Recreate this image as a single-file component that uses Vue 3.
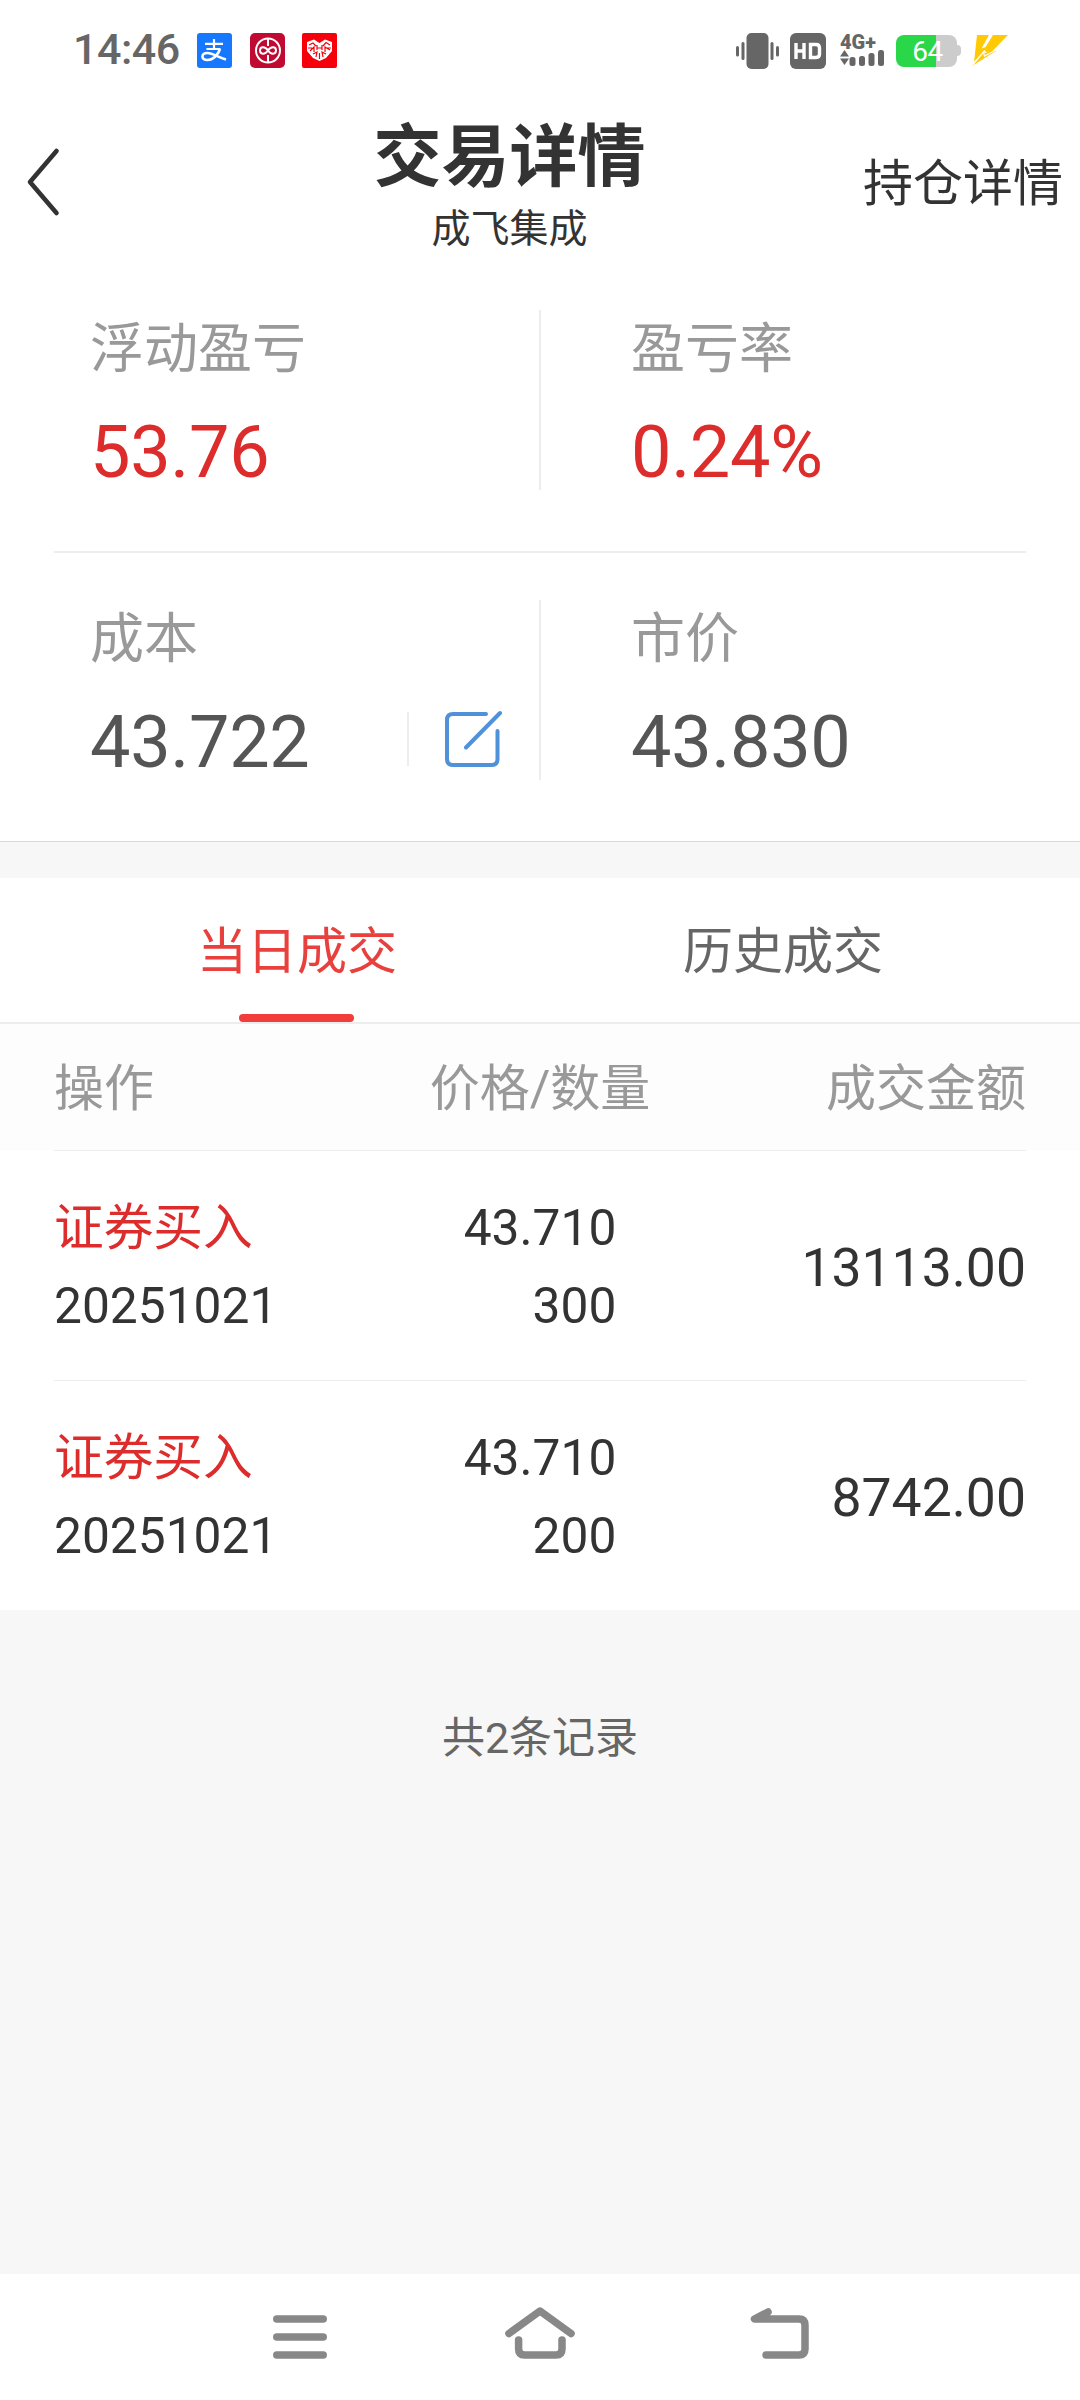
<script setup>
    import { ref } from 'vue';

    const activeTab = ref('today');

    const tabs = [
        { id: 'today', name: '当日成交' },
        { id: 'history', name: '历史成交' }
    ]

    const stats = [
        [
            { label: '浮动盈亏', value: '53.76', up: true },
            { label: '盈亏率', value: '0.24%', up: true }
        ],
        [
            { label: '成本', value: '43.722', editable: true },
            { label: '市价', value: '43.830' }
        ]
    ]

    const deals = ref([
        { id: 1, type: '证券买入', date: '20251021', price: '43.710', count: 300, amount: '13113.00' },
        { id: 2, type: '证券买入', date: '20251021', price: '43.710', count: 200, amount: '8742.00' }
    ])
</script>

<template>
  <div class="page">
    <div class="status">
        <span class="status__time">14:46</span>
        <svg class="status__app" viewBox="0 0 35 35">
            <rect width="35" height="35" rx="3" fill="#1677ff" />
            <g fill="none" stroke="#fff">
                <path d="M8 10.8H26M17 6V16M9.500 16H23.500" stroke-width="2.200" />
                <path d="M23 16C21 22 16 27 10.500 27C3.500 27 4 20 10.500 20C16 20 21 24.500 29 26.500" stroke-width="2.600" />
            </g>
        </svg>
        <svg class="status__app" viewBox="0 0 35 35">
            <rect width="35" height="35" rx="5" fill="#c00a32" />
            <g fill="none" stroke="#fff" stroke-width="2">
                <circle cx="18" cy="17.500" r="12" />
                <path d="M18 5.500V13M18 22V29.500M18 17.500C15 13 10 13.500 10 17.500C10 21.500 15 22 18 17.500C21 13 26 13.500 26 17.500C26 21.500 21 22 18 17.500" />
            </g>
        </svg>
        <svg class="status__app" viewBox="0 0 35 35">
            <rect width="35" height="35" rx="2" fill="#f5000b" />
            <path d="M5 9L12 6.500L17.500 10L23 6.500L30 9V18L24 25L17.500 28L11 25L5 18Z" fill="#fff" />
            <path d="M7 12L11 10L14 13M8 18L12 14V19M21 13L24 9.500L28 12M23 19V14L28 17M15 12V17M20 12V17M15 15H20M11 21L15 19L14 24M24 21L20 19L21 24M17.500 20V26M6 15H10M25 15H29" fill="none" stroke="#f5000b" stroke-width="1.200" />
        </svg>
        <div class="status__right">
            <svg width="43" height="36" viewBox="0 0 43 36" fill="#666">
                <rect x="10.500" width="22" height="36" rx="5" />
                <rect y="13" width="3" height="10.500" rx="1.500" />
                <rect x="5.500" y="9" width="3" height="18" rx="1.500" />
                <rect x="34.500" y="9" width="3" height="18" rx="1.500" />
                <rect x="40" y="13" width="3" height="10.500" rx="1.500" />
            </svg>
            <svg class="status__hd" width="36" height="36" viewBox="0 0 36 36">
                <rect width="36" height="36" rx="6" fill="#666" />
                <path d="M6 10V26M14 10V26M6 18H14M20.500 11.500H26Q29.500 11.500 29.500 15V21Q29.500 24.500 26 24.500H20.500Z" fill="none" stroke="#fff" stroke-width="3.400" />
            </svg>
            <div class="signal">
                <span class="signal__type">4G+</span>
                <svg width="44" height="17" viewBox="0 0 44 17" fill="#666">
                    <path d="M4.500 0L9 6.500H0ZM4.500 15L9 8.500H0Z" />
                    <rect x="9.500" y="7" width="6" height="9" rx="2.500" />
                    <rect x="19" y="6" width="6" height="10" rx="2.500" />
                    <rect x="28.500" y="3" width="6" height="13" rx="2.500" />
                    <rect x="38" y="0" width="6" height="16" rx="2.500" />
                </svg>
            </div>
            <div class="battery">
                <div class="battery__body">64</div>
                <div class="battery__cap"></div>
            </div>
            <svg width="36" height="31" viewBox="0 0 36 31" fill="#ffc905">
                <path d="M5 0H17L9.500 13.500L15.500 11.500L2 27Z" />
                <path d="M21 0H36L20.500 16H24L0 31L10 17.500L15 18L12 14.500Z" />
                <path d="M1 29.500L11.500 17L12.500 21L23 15.500" fill="none" stroke="#fff" stroke-width="1.200" />
            </svg>
        </div>
    </div>

    <header class="header">
        <div class="header__back">
            <svg width="36" height="72" viewBox="0 0 36 72" fill="none" stroke="#333" stroke-width="4.600" stroke-linecap="round" stroke-linejoin="round">
                <path d="M30.500 5L4 36L30.500 67" />
            </svg>
        </div>
        <div class="header__center">
            <h1 class="header__title">交易详情</h1>
            <div class="header__name">成飞集成</div>
        </div>
        <a class="header__link">持仓详情</a>
    </header>

    <section class="stats">
        <div v-for="(row, index) in stats" :key="index" class="stats__row">
            <div v-for="item in row" :key="item.label" class="stats__cell">
                <div class="stats__label">{{ item.label }}</div>
                <div class="stats__line">
                    <span class="stats__value" :class="{ 'stats__value--up': item.up }">{{ item.value }}</span>
                    <div v-if="item.editable" class="edit">
                        <svg width="60" height="60" viewBox="0 0 60 60" fill="none" stroke="#4f92d9" stroke-width="4" stroke-linecap="round" stroke-linejoin="round">
                            <path d="M42 5H9Q3 5 3 11V50Q3 56 9 56H47.500Q53.500 56 53.500 50V22M22 38.500L56 4" />
                        </svg>
                    </div>
                </div>
            </div>
        </div>
    </section>

    <nav class="tabs">
        <div
            v-for="tab in tabs"
            :key="tab.id"
            class="tabs__item"
            :class="{ 'tabs__item--active': activeTab === tab.id }"
            @click="activeTab = tab.id"
        >
            {{ tab.name }}
        </div>
    </nav>

    <div class="head">
        <div class="head__row">
            <span>操作</span>
            <span>价格/数量</span>
            <span>成交金额</span>
        </div>
    </div>

    <div class="list">
        <div v-for="deal in deals" :key="deal.id" class="deal">
            <div>
                <div class="deal__type">{{ deal.type }}</div>
                <div>{{ deal.date }}</div>
            </div>
            <div class="deal__price">
                <div>{{ deal.price }}</div>
                <div>{{ deal.count }}</div>
            </div>
            <div class="deal__amount">{{ deal.amount }}</div>
        </div>
    </div>

    <div class="total">共{{ deals.length }}条记录</div>

    <div class="navbar">
        <svg width="80" height="80" viewBox="0 0 80 80">
            <path d="M16.800 25H63.200M16.800 43H63.200M16.800 61H63.200" />
        </svg>
        <svg width="80" height="80" viewBox="0 0 80 80">
            <path d="M9 39.500L40 17L71 39.500M18.600 46V55Q18.600 61 24.600 61H56Q62 61 62 55V46" />
        </svg>
        <svg width="80" height="80" viewBox="0 0 80 80">
            <path d="M28 18L14.500 25H59Q65 25 65 31V55Q65 61 59 61H26" />
        </svg>
    </div>
  </div>
</template>

<style>
    body {
        margin: 0;
        background-color: #f7f7f7;
    }
</style>

<style scoped>
    .page {
        display: flex;
        flex-direction: column;
        width: 1080px;
        height: 2400px;
        background-color: #f7f7f7;
        color: #333;
        font-family: Roboto, "Noto Sans CJK SC", sans-serif;
        font-size: 50px;
    }
    svg {
        display: block;
        flex-shrink: 0;
    }
    .status {
        display: flex;
        align-items: center;
        height: 101px;
        padding: 0 72px 0 73px;
        background-color: #fff;
    }
    .status__time {
        width: 124px;
        font-size: 43px;
        line-height: 50px;
        font-weight: 500;
        letter-spacing: -0.5px;
        color: #666;
        padding-bottom: 3px;
        box-sizing: border-box;
    }
    .status__app {
        width: 35px;
        height: 35px;
        margin-right: 17.5px;
    }
    .status__right {
        display: flex;
        align-items: center;
        margin-left: auto;
    }
    .status__hd {
        margin: 0 14px 0 11px;
    }
    .signal {
        width: 56px;
        height: 32px;
    }
    .signal__type {
        display: block;
        height: 15px;
        font-size: 20px;
        line-height: 15px;
        font-weight: 900;
        color: #666;
    }
    .battery {
        display: flex;
        align-items: center;
        width: 65px;
        margin-right: 11px;
    }
    .battery__body {
        box-sizing: border-box;
        width: 61px;
        height: 32px;
        padding-left: 2px;
        border-radius: 8px;
        background: linear-gradient(to right, #2ad749 40px, #ccc 40px);
        color: #fff;
        font-size: 28px;
        line-height: 33px;
        letter-spacing: -0.5px;
        text-align: center;
    }
    .battery__cap {
        width: 4px;
        height: 11px;
        border-radius: 0 4px 4px 0;
        background-color: #ccc;
    }
    .header {
        display: flex;
        height: 162px;
        background-color: #fff;
    }
    .header__back {
        width: 130px;
        padding: 45px 0 0 26px;
    }
    .header__center {
        flex: 1;
        padding-top: 19px;
        text-align: center;
    }
    .header__title {
        margin: 0;
        font-size: 68px;
        line-height: 76px;
        font-weight: 700;
    }
    .header__name {
        margin-top: 8px;
        font-size: 39px;
        line-height: 51px;
    }
    .header__link {
        padding: 49px 17px 0 0;
        line-height: 68px;
    }
    .stats {
        padding: 0 54px;
        border-bottom: 1px solid #d9d9d9;
        background-color: #fff;
    }
    .stats__row {
        display: flex;
        padding: 47px 0 61px;
    }
    .stats__row:first-child {
        border-bottom: 2px solid #ededed;
    }
    .stats__cell {
        flex: 1;
        box-sizing: border-box;
        height: 180px;
        padding-left: 90px;
    }
    .stats__cell:first-child {
        flex: 0 0 487px;
        padding-left: 36px;
        border-right: 2px solid #ededed;
    }
    .stats__label {
        font-size: 54px;
        line-height: 80px;
        color: #999;
    }
    .stats__line {
        display: flex;
        align-items: center;
        justify-content: space-between;
        height: 75px;
        margin-top: 25px;
    }
    .stats__value {
        font-size: 72px;
        line-height: 75px;
        letter-spacing: -0.3px;
        color: #555;
    }
    .stats__value--up {
        color: #dd2c2c;
    }
    .edit {
        display: flex;
        align-items: center;
        height: 54px;
        margin: 0 35px 7px 0;
        padding-left: 35px;
        border-left: 2px solid #ededed;
    }
    .tabs {
        display: flex;
        margin-top: 36px;
        padding: 0 54px;
        border-bottom: 2px solid #ededed;
        background-color: #fff;
    }
    .tabs__item {
        display: flex;
        flex: 1;
        flex-direction: column;
        align-items: center;
        height: 144px;
        line-height: 148px;
        color: #666;
        cursor: pointer;
    }
    .tabs__item--active {
        color: #e8403d;
    }
    .tabs__item--active::after {
        content: '';
        width: 115px;
        height: 8px;
        margin: -12px 1px 0 0;
        border-radius: 4px;
        background-color: #f13d3b;
    }
    .head {
        padding: 0 54px;
        background-color: #fdfdfd;
    }
    .head__row {
        display: grid;
        grid-template-columns: repeat(3, 1fr);
        height: 126px;
        line-height: 130px;
        border-bottom: 1px solid #ededed;
        color: #999;
        text-align: center;
    }
    .head__row span:first-child {
        text-align: left;
    }
    .head__row span:last-child {
        text-align: right;
    }
    .list {
        padding: 0 54px;
        background-color: #fff;
    }
    .deal {
        display: grid;
        grid-template-columns: repeat(3, 1fr);
        align-items: center;
        padding: 38px 0 35px;
        border-bottom: 1px solid #ededed;
        font-size: 49.7px;
        line-height: 78px;
    }
    .deal:last-child {
        border-bottom: none;
    }
    .deal__type {
        color: #dd2c2c;
    }
    .deal__price {
        justify-self: center;
        text-align: right;
    }
    .deal__amount {
        padding-top: 2px;
        font-size: 53.5px;
        text-align: right;
    }
    .total {
        padding-top: 97px;
        font-size: 43px;
        line-height: 62px;
        color: #666;
        text-align: center;
    }
    .navbar {
        display: flex;
        justify-content: center;
        gap: 160px;
        height: 106px;
        margin-top: auto;
        padding-top: 20px;
        background-color: #fff;
    }
    .navbar path {
        fill: none;
        stroke: #888;
        stroke-width: 7.5;
        stroke-linecap: round;
        stroke-linejoin: round;
    }
</style>
